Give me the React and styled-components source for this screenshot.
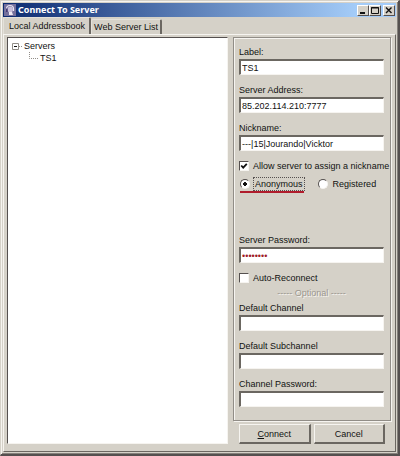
import React, { useState } from "react";
import styled, { createGlobalStyle } from "styled-components";

const GlobalStyle = createGlobalStyle`
  * {
    box-sizing: border-box;
  }

  body {
    margin: 0;
    background: #d5d1c8;
    color: #111;
    font-family: "Liberation Sans", Arial, sans-serif;
    font-size: 9px;
    line-height: 12px;
  }
`;

const Window = styled.div`
  display: flex;
  flex-direction: column;
  min-height: 100vh;
  padding: 1px;
  background: #d5d1c8;
  border: 1px solid #d5d1c8;
  border-right: 2px solid #55504f;
  border-bottom: 2px solid #55504f;
  box-shadow: inset 1px 1px 0 #f6f4f0, inset -1px -1px 0 #85817b;
`;

const TitleBar = styled.header`
  display: flex;
  align-items: center;
  gap: 2px;
  height: 14px;
  margin: 1px 1px 0;
  padding: 0 1px;
  background: linear-gradient(to right, #0c2a70, #a4ccf8 90%);
`;

const Title = styled.h1`
  flex: 1;
  margin: 0;
  color: #fff;
  font-family: "Noto Sans", sans-serif;
  font-size: 9px;
  font-weight: 700;
  line-height: 14px;
`;

const WindowButtons = styled.div`
  display: flex;
`;

const WindowButton = styled.button`
  display: flex;
  width: 12px;
  height: 11px;
  padding: 0;
  margin-left: ${(props) => (props.$apart ? "2px" : "0")};
  background: #d5d1c8;
  border: 1px solid;
  border-color: #fff #55504f #55504f #fff;
`;

const TabBar = styled.div`
  display: flex;
  align-items: flex-end;
  height: 17px;
  padding-left: 1px;
`;

const Tab = styled.button`
  height: ${(props) => (props.$active ? "17px" : "15px")};
  padding: ${(props) => (props.$active ? "0 4px 0 5px" : "0 2px")};
  color: inherit;
  background: #d5d1c8;
  border: solid;
  border-width: 1px 2px 0 1px;
  border-color: #e4e1da #6b6761 #fff #e4e1da;
  border-radius: 2px 2px 0 0;
  font: inherit;
`;

const TabPage = styled.main`
  display: grid;
  flex: 1;
  grid-template-columns: minmax(0, 7fr) minmax(0, 5fr);
  gap: 5px;
  margin: 0 1px 1px;
  padding: 2px 4px 7px 3px;
  border: 1px solid;
  border-color: #f6f4f0 #6b6761 #6b6761 #f6f4f0;
`;

const Tree = styled.ul`
  margin: 0;
  padding: 2px 4px;
  list-style: none;
  background: #fff;
  border: 1px solid;
  border-color: #55504f #f6f4f0 #f6f4f0 #55504f;
`;

const TreeItem = styled.li`
  display: flex;
  align-items: center;
  gap: 2px;
  height: 12px;
  padding-left: ${(props) => props.$level * 16}px;
`;

const SidePanel = styled.form`
  display: flex;
  flex-direction: column;
  gap: 3px;
`;

const Group = styled.div`
  flex: 1;
  padding: 8px 6px 3px 5px;
  border: 1px solid #918d87;
  box-shadow: 1px 1px 0 #f6f4f0, inset 1px 1px 0 #f6f4f0;
`;

const Field = styled.div`
  display: flex;
  flex-direction: column;
  gap: 1px;
  margin-bottom: 9px;
`;

const TextInput = styled.input`
  width: 100%;
  height: 16px;
  padding: 0 1px;
  color: ${(props) => (props.type === "password" ? "#a01c28" : "inherit")};
  background: #fff;
  border: solid;
  border-width: 2px 1px 1px 2px;
  border-color: #6b6761 #f6f4f0 #f6f4f0 #6b6761;
  border-radius: 0;
  outline: none;
  font: inherit;
`;

const Option = styled.label`
  display: flex;
  align-items: center;
  gap: 3px;
  height: 12px;
  white-space: nowrap;
`;

const CheckBox = styled.input`
  appearance: none;
  flex: none;
  width: 10px;
  height: 10px;
  margin: 0 1px 0 0;
  background: #fff;
  border: 1px solid;
  border-color: #55504f #f6f4f0 #f6f4f0 #55504f;

  &:checked {
    background: #fff
      url("data:image/svg+xml,%3Csvg xmlns='http://www.w3.org/2000/svg' viewBox='0 0 8 8'%3E%3Cpath d='M1.2 3.5 3.2 5.6 6.8 1.8' fill='none' stroke='%23111' stroke-width='1.8'/%3E%3C/svg%3E");
  }
`;

const Radio = styled(CheckBox).attrs({ type: "radio" })`
  border-radius: 50%;

  &:checked {
    background: radial-gradient(circle, #111 0 2px, #fff 2px);
  }
`;

const RadioRow = styled.div`
  display: flex;
  gap: 14px;
  margin: 6px 0 41px;
  padding-left: 1px;
`;

const Underlined = styled.div`
  padding-bottom: 1px;
  border-bottom: 2px solid #b01c2c;
`;

const RadioText = styled.span`
  padding: 0 1px;
  outline: ${(props) => (props.$focused ? "1px dotted #55504f" : "none")};
`;

const Divider = styled.p`
  margin: 3px 0;
  color: #9b978f;
  text-align: center;
  text-shadow: 1px 1px 0 #f6f4f0;
`;

const Buttons = styled.div`
  display: flex;
  gap: 3px;
  padding: 0 6px;
`;

const PushButton = styled.button`
  flex: 1;
  height: 20px;
  padding: 0;
  color: inherit;
  background: #d5d1c8;
  border: solid;
  border-width: 1px 2px 2px 1px;
  border-color: #f6f4f0 #6b6761 #6b6761 #f6f4f0;
  font: inherit;
`;

function AppIcon() {
  return (
    <svg width="12" height="12" viewBox="0 0 12 12" aria-hidden="true">
      <rect width="12" height="12" fill="#75709c" />
      <path d="M2.5 7V5Q2.5 1.5 6 1.5T9.5 5V7" fill="none" stroke="#e8e4f2" strokeWidth="1.2" />
      <ellipse cx="6.3" cy="5.4" rx="2.6" ry="3" fill="#c9c0dc" />
      <path d="M5 8h3l1 3H5z" fill="#efe9f4" />
      <path d="M2 4.5h1.6v3.5H2z" fill="#453c75" />
    </svg>
  );
}

function TextField({ id, label, ...rest }) {
  return (
    <Field>
      <label htmlFor={id}>{label}</label>
      <TextInput id={id} {...rest} />
    </Field>
  );
}

function App() {
  const [access, setAccess] = useState("anonymous");

  return (
    <>
      <GlobalStyle />
      <Window>
        <TitleBar>
          <AppIcon />
          <Title>Connect To Server</Title>
          <WindowButtons>
            <WindowButton aria-label="Minimize">
              <svg width="10" height="9" viewBox="0 0 10 9">
                <path d="M2 7h5" stroke="#111" strokeWidth="2" />
              </svg>
            </WindowButton>
            <WindowButton aria-label="Maximize">
              <svg width="10" height="9" viewBox="0 0 10 9">
                <path d="M1.5 1.5h7v6h-7zM1 2h8" fill="none" stroke="#111" />
              </svg>
            </WindowButton>
            <WindowButton aria-label="Close" $apart>
              <svg width="10" height="9" viewBox="0 0 10 9">
                <path d="M2 1.5 7.5 7M7.5 1.5 2 7" stroke="#111" strokeWidth="1.4" />
              </svg>
            </WindowButton>
          </WindowButtons>
        </TitleBar>

        <TabBar role="tablist">
          <Tab role="tab" aria-selected="true" $active>
            Local Addressbook
          </Tab>
          <Tab role="tab" aria-selected="false">
            Web Server List
          </Tab>
        </TabBar>

        <TabPage>
          <Tree>
            <TreeItem $level={0}>
              <svg width="10" height="9" viewBox="0 0 10 9" aria-hidden="true">
                <path d="M.5 1.5h6v6h-6z" fill="#fff" stroke="#918d87" />
                <path d="M2 4.5h3" stroke="#111" />
                <path d="M7 4.5h3" stroke="#918d87" strokeDasharray="1 1" />
              </svg>
              Servers
            </TreeItem>
            <TreeItem $level={1}>
              <svg width="10" height="12" viewBox="0 0 10 12" aria-hidden="true">
                <path d="M1.5 0v6.5H10" fill="none" stroke="#918d87" strokeDasharray="1 1" />
              </svg>
              TS1
            </TreeItem>
          </Tree>

          <SidePanel onSubmit={(e) => e.preventDefault()}>
            <Group>
              <TextField id="label" label="Label:" defaultValue="TS1" />
              <TextField id="address" label="Server Address:" defaultValue="85.202.114.210:7777" />
              <TextField id="nickname" label="Nickname:" defaultValue="---|15|Jourando|Vicktor" />
              <Option>
                <CheckBox type="checkbox" defaultChecked />
                Allow server to assign a nickname
              </Option>
              <RadioRow>
                <Underlined>
                  <Option>
                    <Radio
                      name="access"
                      checked={access === "anonymous"}
                      onChange={() => setAccess("anonymous")}
                    />
                    <RadioText $focused={access === "anonymous"}>Anonymous</RadioText>
                  </Option>
                </Underlined>
                <Option>
                  <Radio
                    name="access"
                    checked={access === "registered"}
                    onChange={() => setAccess("registered")}
                  />
                  <RadioText $focused={access === "registered"}>Registered</RadioText>
                </Option>
              </RadioRow>
              <TextField id="password" type="password" label="Server Password:" defaultValue="teamtalk" />
              <Option>
                <CheckBox type="checkbox" />
                Auto-Reconnect
              </Option>
              <Divider>----- Optional -----</Divider>
              <TextField id="channel" label="Default Channel" />
              <TextField id="subchannel" label="Default Subchannel" />
              <TextField id="channelPassword" label="Channel Password:" />
            </Group>
            <Buttons>
              <PushButton type="submit">
                <u>C</u>onnect
              </PushButton>
              <PushButton type="button">Cancel</PushButton>
            </Buttons>
          </SidePanel>
        </TabPage>
      </Window>
    </>
  );
}

export default App;
